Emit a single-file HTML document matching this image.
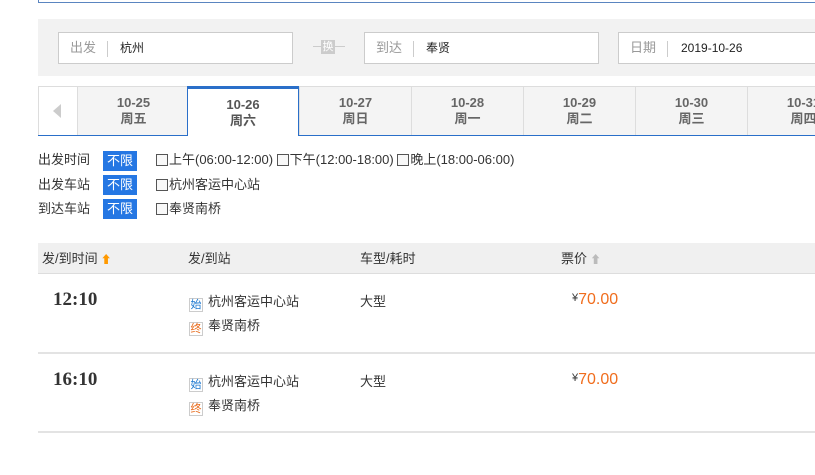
<!DOCTYPE html>
<html><head><meta charset="utf-8"><style>
*{margin:0;padding:0;box-sizing:border-box}
body{width:815px;height:475px;overflow:hidden;background:#fff;position:relative;font-family:"Liberation Sans","Noto Sans CJK SC",sans-serif;font-size:12px;color:#333}
.a{position:absolute}
.inp{position:absolute;top:32px;height:32px;border:1px solid #ccc;background:#fff}
.inp .l{position:absolute;left:11px;top:6px;color:#999;font-size:13px;line-height:18px}
.inp .s{position:absolute;left:48px;top:8px;width:1px;height:16px;background:#ccc}
.inp .v{position:absolute;left:61px;top:6px;color:#222;font-size:12px;line-height:18px}
.tab{position:absolute;top:87px;height:48px;width:112px;background:#f4f4f4;border-left:1px solid #ddd;text-align:center;font-weight:bold;color:#666;font-size:13px;line-height:16px;padding-top:8px}
.btn{position:absolute;left:103px;width:34px;height:20px;background:#2577e3;color:#fff;text-align:center;line-height:20px;font-size:13px}
.cb{display:inline-block;width:12px;height:12px;border:1px solid #555;vertical-align:-2px;margin-right:1px;background:#f8f8f8}
.row{position:absolute;font-size:13px;line-height:16px}
.tm{position:absolute;left:53px;font-family:"Liberation Serif",serif;font-weight:bold;font-size:19px;color:#333}
.tg{display:inline-block;width:14px;height:14px;border:1px solid #ccc;font-size:11px;line-height:12px;text-align:center;margin-right:5px;vertical-align:-2px}
.pr{position:absolute;left:572px;color:#f06d1d;font-size:16px}
.pr span{color:#333;font-size:11px;vertical-align:3px}
</style></head><body>
<div class="a" style="left:38px;top:0;width:777px;height:3px;border-left:1px solid #5a85c0;border-bottom:1px solid #5a85c0"></div>
<div class="a" style="left:38px;top:19px;width:777px;height:57px;background:#f2f2f2"></div>
<div class="inp" style="left:58px;width:235px"><span class="l">出发</span><span class="s"></span><span class="v">杭州</span></div>
<div class="a" style="left:313px;top:46px;width:32px;height:1px;background:#ccc"></div>
<div class="a" style="left:321px;top:40px;width:14px;height:14px;background:#ccc;color:#fff;font-size:11px;line-height:14px;text-align:center">换</div>
<div class="inp" style="left:364px;width:235px"><span class="l">到达</span><span class="s"></span><span class="v">奉贤</span></div>
<div class="inp" style="left:618px;width:210px"><span class="l">日期</span><span class="s"></span><span class="v" style="left:62px">2019-10-26</span></div>
<div class="a" style="left:38px;top:86px;width:40px;height:49px;background:#fff;border:1px solid #ddd;border-bottom:none"></div>
<div class="a" style="left:53px;top:104px;width:0;height:0;border-top:7px solid transparent;border-bottom:7px solid transparent;border-right:8px solid #ccc"></div>
<div class="tab" style="left:77px">10-25<br>周五</div>
<div class="tab" style="left:187px;background:#fff;border:1px solid #2a6fc9;border-top:3px solid #2a6fc9;border-bottom:none;top:86px;height:50px;z-index:2;color:#555">10-26<br>周六</div>
<div class="tab" style="left:299px">10-27<br>周日</div>
<div class="tab" style="left:411px">10-28<br>周一</div>
<div class="tab" style="left:523px">10-29<br>周二</div>
<div class="tab" style="left:635px">10-30<br>周三</div>
<div class="tab" style="left:747px">10-31<br>周四</div>
<div class="a" style="left:38px;top:86px;width:777px;height:1px;background:#ddd"></div>
<div class="a" style="left:38px;top:135px;width:777px;height:1px;background:#2a6fc9"></div>
<div class="row" style="left:38px;top:152px">出发时间</div>
<div class="btn" style="top:151px">不限</div>
<div class="row" style="left:156px;top:152px"><span class="cb"></span>上午(06:00-12:00)&nbsp;<span class="cb"></span>下午(12:00-18:00)&nbsp;<span class="cb"></span>晚上(18:00-06:00)</div>
<div class="row" style="left:38px;top:177px">出发车站</div>
<div class="btn" style="top:175px">不限</div>
<div class="row" style="left:156px;top:177px"><span class="cb"></span>杭州客运中心站</div>
<div class="row" style="left:38px;top:201px">到达车站</div>
<div class="btn" style="top:199px">不限</div>
<div class="row" style="left:156px;top:201px"><span class="cb"></span>奉贤南桥</div>
<div class="a" style="left:38px;top:243px;width:777px;height:31px;background:#f0f0f0;border-bottom:1px solid #ddd"></div>
<div class="row" style="left:42px;top:251px">发/到时间<span style="color:#f90;font-size:11px"> ⬆</span></div>
<div class="row" style="left:188px;top:251px">发/到站</div>
<div class="row" style="left:360px;top:251px">车型/耗时</div>
<div class="row" style="left:561px;top:251px">票价<span style="color:#bbb;font-size:11px"> ⬆</span></div>
<div class="tm" style="top:289px">12:10</div>
<div class="row" style="left:189px;top:294px"><span class="tg" style="color:#1b78d0">始</span>杭州客运中心站</div>
<div class="row" style="left:189px;top:318px"><span class="tg" style="color:#e86a1a">终</span>奉贤南桥</div>
<div class="row" style="left:360px;top:294px">大型</div>
<div class="pr" style="top:291px"><span>¥</span>70.00</div>
<div class="a" style="left:38px;top:352px;width:777px;height:2px;background:#e3e3e3"></div>
<div class="tm" style="top:369px">16:10</div>
<div class="row" style="left:189px;top:374px"><span class="tg" style="color:#1b78d0">始</span>杭州客运中心站</div>
<div class="row" style="left:189px;top:398px"><span class="tg" style="color:#e86a1a">终</span>奉贤南桥</div>
<div class="row" style="left:360px;top:374px">大型</div>
<div class="pr" style="top:371px"><span>¥</span>70.00</div>
<div class="a" style="left:38px;top:431px;width:777px;height:2px;background:#e3e3e3"></div>
</body></html>
